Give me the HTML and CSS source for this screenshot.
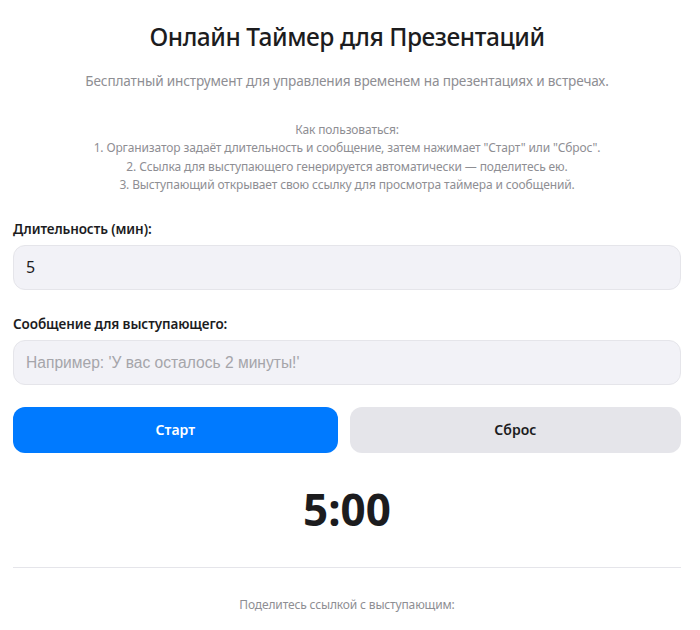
FILE: index.html
```html
<!DOCTYPE html>
<html lang="ru">
<head>
<meta charset="utf-8">
<title>Онлайн Таймер для Презентаций</title>
<link rel="stylesheet" href="styles.css">
</head>
<body>
<main class="page">
  <h1 class="title">Онлайн Таймер для Презентаций</h1>
  <p class="subtitle">Бесплатный инструмент для управления временем на презентациях и встречах.</p>
  <div class="howto">
    <p>Как пользоваться:</p>
    <p>1. Организатор задаёт длительность и сообщение, затем нажимает "Старт" или "Сброс".</p>
    <p>2. Ссылка для выступающего генерируется автоматически — поделитесь ею.</p>
    <p>3. Выступающий открывает свою ссылку для просмотра таймера и сообщений.</p>
  </div>
  <div class="field">
    <label class="label" for="dur">Длительность (мин):</label>
    <input class="input" id="dur" type="number" value="5">
  </div>
  <div class="field">
    <label class="label" for="msg">Сообщение для выступающего:</label>
    <input class="input" id="msg" type="text" placeholder="Например: 'У вас осталось 2 минуты!'">
  </div>
  <div class="buttons">
    <button class="btn btn-primary">Старт</button>
    <button class="btn btn-secondary">Сброс</button>
  </div>
  <div class="timer">5:00</div>
  <hr class="divider">
  <p class="share">Поделитесь ссылкой с выступающим:</p>
</main>
</body>
</html>
```
FILE: styles.css
```css
* { box-sizing: border-box; }
html, body { margin: 0; padding: 0; background: #ffffff; }
body {
  font-family: "Noto Sans", "Open Sans", sans-serif;
  color: #1c1c1e;
}
.page {
  padding: 0 19px 0 13px;
  display: flex;
  flex-direction: column;
}
.title {
  margin: 21px 0 0;
  font-size: 24.5px;
  font-weight: 500;
  letter-spacing: -0.45px;
  line-height: 32px;
  text-align: center;
  color: #1c1c1e;
}
.subtitle {
  margin: 18px 0 0;
  font-size: 13.6px;
  letter-spacing: -0.15px;
  line-height: 20px;
  text-align: center;
  color: #8e8e93;
}
.howto {
  margin-top: 30px;
  text-align: center;
  color: #8e8e93;
  font-size: 12px;
  letter-spacing: -0.13px;
  line-height: 18.4px;
}
.howto p { margin: 0; }
.field {
  display: flex;
  flex-direction: column;
  gap: 6px;
}
.howto + .field { margin-top: 24px; }
.field + .field { margin-top: 24px; }
.label {
  font-size: 13.5px;
  font-weight: 600;
  letter-spacing: -0.1px;
  line-height: 20px;
  color: #1c1c1e;
}
.input {
  height: 45px;
  border: 1px solid #e5e5ea;
  border-radius: 12px;
  background: #f2f2f7;
  padding: 0 12px;
  font-family: "Noto Sans", sans-serif;
  font-size: 16px;
  color: #1c1c1e;
  outline: none;
  -moz-appearance: textfield;
}
.input::-webkit-outer-spin-button,
.input::-webkit-inner-spin-button { -webkit-appearance: none; margin: 0; }
.input::placeholder {
  color: #a5a5aa;
  font-family: "Liberation Sans", Arial, sans-serif;
  font-size: 15.6px;
}
.buttons {
  margin-top: 22px;
  display: flex;
  gap: 12px;
}
.btn {
  flex: 1 1 auto;
  height: 46px;
  border: none;
  border-radius: 12px;
  font-family: "Noto Sans", sans-serif;
  font-size: 14px;
  font-weight: 600;
  cursor: pointer;
}
.btn-primary { background: #007aff; color: #ffffff; }
.btn-secondary { background: #e5e5ea; color: #1c1c1e; padding: 0 8px; }
.timer {
  margin-top: 29px;
  text-align: center;
  font-size: 44px;
  font-weight: 700;
  line-height: 54px;
  color: #1c1c1e;
}
.divider {
  margin: 31px 0 0;
  border: none;
  border-top: 1px solid #e5e5ea;
  width: 100%;
}
.share {
  margin: 28px 0 0;
  text-align: center;
  font-size: 12px;
  letter-spacing: -0.15px;
  color: #8e8e93;
}
```
